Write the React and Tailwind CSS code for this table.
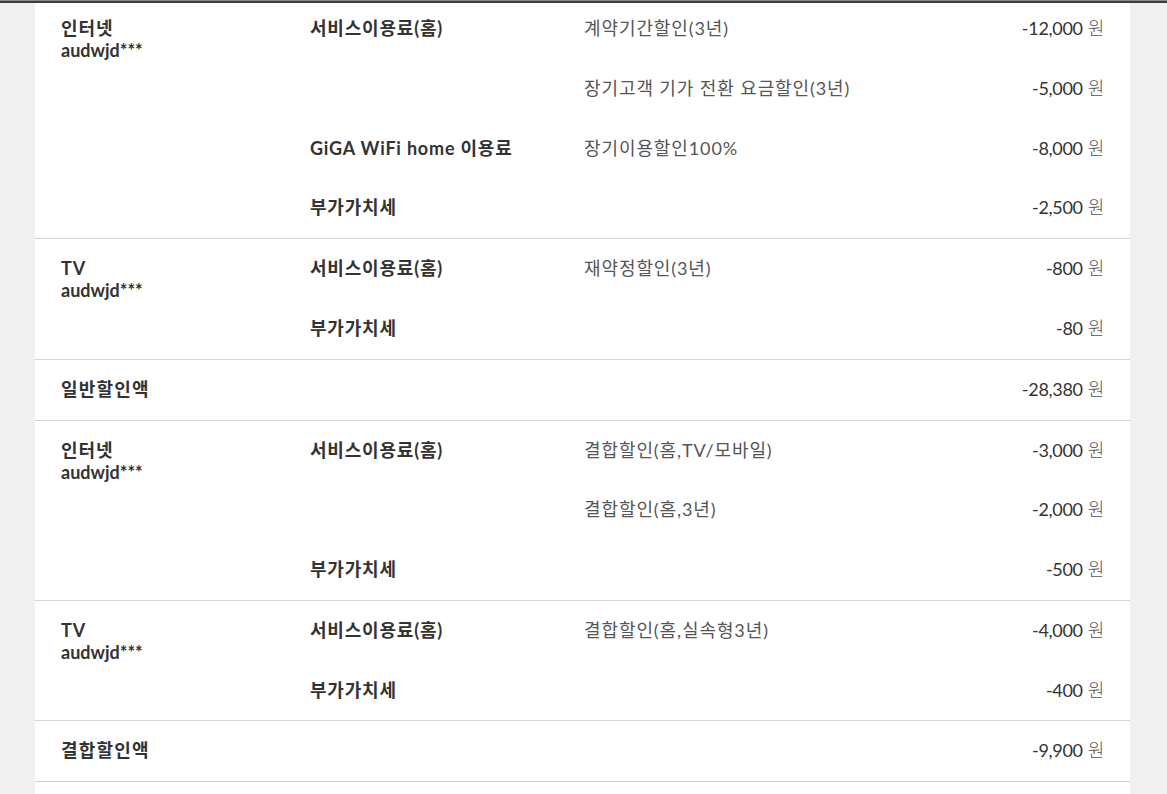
const groups = [
  {
    type: '인터넷',
    id: 'audwjd***',
    rows: [
      { item: '서비스이용료(홈)', desc: '계약기간할인(3년)', amount: '-12,000' },
      { item: '', desc: '장기고객 기가 전환 요금할인(3년)', amount: '-5,000' },
      { item: 'GiGA WiFi home 이용료', desc: '장기이용할인100%', amount: '-8,000' },
      { item: '부가가치세', desc: '', amount: '-2,500' },
    ],
  },
  {
    type: 'TV',
    id: 'audwjd***',
    rows: [
      { item: '서비스이용료(홈)', desc: '재약정할인(3년)', amount: '-800' },
      { item: '부가가치세', desc: '', amount: '-80' },
    ],
  },
  { total: '일반할인액', amount: '-28,380' },
  {
    type: '인터넷',
    id: 'audwjd***',
    rows: [
      { item: '서비스이용료(홈)', desc: '결합할인(홈,TV/모바일)', amount: '-3,000' },
      { item: '', desc: '결합할인(홈,3년)', amount: '-2,000' },
      { item: '부가가치세', desc: '', amount: '-500' },
    ],
  },
  {
    type: 'TV',
    id: 'audwjd***',
    rows: [
      { item: '서비스이용료(홈)', desc: '결합할인(홈,실속형3년)', amount: '-4,000' },
      { item: '부가가치세', desc: '', amount: '-400' },
    ],
  },
  { total: '결합할인액', amount: '-9,900' },
];

const Amount = ({ value }) => (
  <div className="ml-auto whitespace-nowrap text-[#333] tracking-[-0.3px]">
    {value}
    <span className="ml-[5px] text-[#555] font-light">원</span>
  </div>
);

const App = () => {
  return (
    <div
      className="h-[794px] flex flex-col bg-[#f0f0f0] text-[18px] leading-[22px] overflow-hidden"
      style={{ fontFamily: 'Lato, "Noto Sans CJK KR", sans-serif' }}
    >
      <div className="h-px shrink-0 bg-[#8a8a8a]" />
      <div className="h-[2px] shrink-0 bg-[#3c3c3c]" />
      <div className="ml-[35px] mr-[37px] flex-1 bg-white">
        {groups.map((g, i) =>
          g.total ? (
            <div key={i} className="flex h-[61px] pt-[18px] px-[26px] border-b border-[#d4d4d4]">
              <div className="font-bold text-[#333] tracking-[1.2px]">{g.total}</div>
              <Amount value={g.amount} />
            </div>
          ) : (
            <div
              key={i}
              className={`flex px-[26px] border-b border-[#d4d4d4] ${i === 0 ? '-mt-[4px]' : ''}`}
            >
              <div className="w-[249px] shrink-0 pt-[18px] font-bold text-[#333]">
                <div className="h-[22px] tracking-[1px]">{g.type}</div>
                <div className="h-[22px]">{g.id}</div>
              </div>
              <div className="flex-1">
                {g.rows.map((r, j) => (
                  <div key={j} className="flex h-[59.75px] pt-[18px]">
                    <div className="w-[274px] shrink-0 font-bold text-[#333] tracking-[0.8px]">{r.item}</div>
                    <div className="text-[#555] tracking-[0.9px]">{r.desc}</div>
                    <Amount value={r.amount} />
                  </div>
                ))}
              </div>
            </div>
          )
        )}
      </div>
    </div>
  );
};

export default App;
